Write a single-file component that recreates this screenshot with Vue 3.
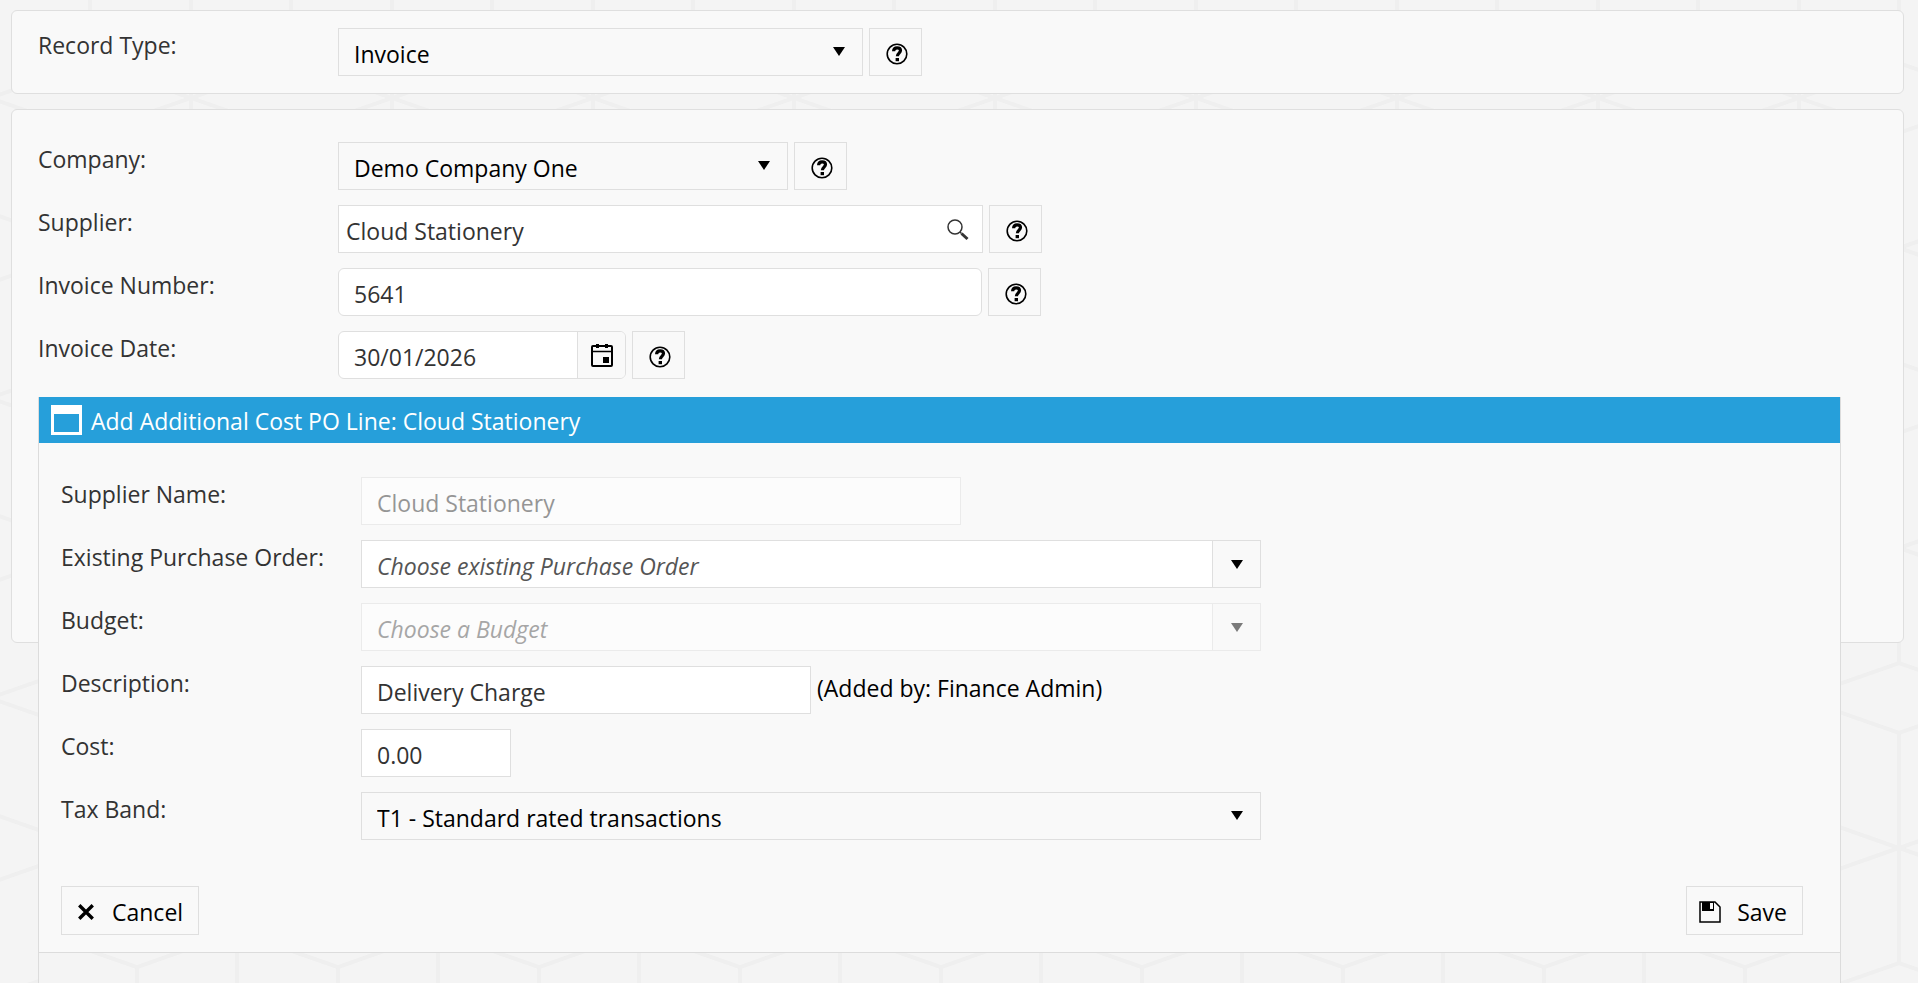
<template>
  <main class="page">
    <section class="card card--type">
      <div class="field">
        <label class="field__label" for="recordType">Record Type:</label>
        <div class="dropdown dropdown--medium">
          <select id="recordType" v-model="recordType">
            <option>Invoice</option>
            <option>Credit Note</option>
          </select>
          <svg class="dropdown__arrow" viewBox="0 0 12 9"><path d="M0 0h12L6 9z" /></svg>
        </div>
        <button type="button" class="help" aria-label="Help">
          <svg viewBox="0 0 22 22"><use href="#icon-help" /></svg>
        </button>
      </div>
    </section>

    <section class="card card--details">
      <div class="field">
        <label class="field__label" for="company">Company:</label>
        <div class="dropdown dropdown--small">
          <select id="company" v-model="company">
            <option>Demo Company One</option>
          </select>
          <svg class="dropdown__arrow" viewBox="0 0 12 9"><path d="M0 0h12L6 9z" /></svg>
        </div>
        <button type="button" class="help" aria-label="Help">
          <svg viewBox="0 0 22 22"><use href="#icon-help" /></svg>
        </button>
      </div>

      <div class="field">
        <label class="field__label" for="supplier">Supplier:</label>
        <div class="search">
          <input id="supplier" v-model="supplier" type="text" />
          <button type="button" class="search__button" aria-label="Search suppliers">
            <svg viewBox="0 0 22 22">
              <circle cx="8" cy="8" r="7" fill="none" stroke="#333" stroke-width="1.5" />
              <path d="M13 13l1.5 1.5" stroke="#333" stroke-width="1.5" />
              <path d="M14.5 14.5l6 5.5" stroke="#333" stroke-width="3" />
            </svg>
          </button>
        </div>
        <button type="button" class="help" aria-label="Help">
          <svg viewBox="0 0 22 22"><use href="#icon-help" /></svg>
        </button>
      </div>

      <div class="field">
        <label class="field__label" for="invoiceNumber">Invoice Number:</label>
        <input id="invoiceNumber" v-model="invoiceNumber" class="textbox textbox--rounded" type="text" />
        <button type="button" class="help" aria-label="Help">
          <svg viewBox="0 0 22 22"><use href="#icon-help" /></svg>
        </button>
      </div>

      <div class="field">
        <label class="field__label" for="invoiceDate">Invoice Date:</label>
        <div class="date">
          <input id="invoiceDate" v-model="invoiceDate" type="text" />
          <button type="button" class="date__button" aria-label="Open calendar">
            <svg viewBox="0 0 22 24">
              <rect x="1" y="3" width="20" height="20" rx="1" fill="none" stroke="#000" stroke-width="2" />
              <path d="M1 8.5h20" stroke="#000" stroke-width="1.5" />
              <path d="M5 1h3v4H5zM14 1h3v4h-3zM12 14h6v6h-6z" />
            </svg>
          </button>
        </div>
        <button type="button" class="help" aria-label="Help">
          <svg viewBox="0 0 22 22"><use href="#icon-help" /></svg>
        </button>
      </div>

      <div class="window-slot">
        <form class="window" @submit.prevent>
          <header class="window__header">
            <svg class="window__icon" viewBox="0 0 31 30">
              <path fill-rule="evenodd" d="M0 0h31v30H0zM3 9v18h25V9z" />
            </svg>
            <h2>Add Additional Cost PO Line: {{ supplier }}</h2>
          </header>

          <div class="window__body">
            <div class="field">
              <label class="field__label" for="supplierName">Supplier Name:</label>
              <input id="supplierName" :value="supplier" class="textbox textbox--name" type="text" disabled />
            </div>

            <div v-for="combo in combos" :key="combo.id" class="field">
              <label class="field__label" :for="combo.id">{{ combo.label }}</label>
              <div class="combo" :class="{ 'combo--disabled': combo.disabled }">
                <input
                  :id="combo.id"
                  v-model="combo.value"
                  type="text"
                  :placeholder="combo.placeholder"
                  :disabled="combo.disabled"
                />
                <button type="button" :disabled="combo.disabled" :aria-label="'Open ' + combo.label">
                  <svg viewBox="0 0 12 9"><path d="M0 0h12L6 9z" /></svg>
                </button>
              </div>
            </div>

            <div class="field">
              <label class="field__label" for="description">Description:</label>
              <input id="description" v-model="description" class="textbox textbox--description" type="text" />
              <span class="field__note">(Added by: Finance Admin)</span>
            </div>

            <div class="field">
              <label class="field__label" for="cost">Cost:</label>
              <input id="cost" v-model="cost" class="textbox textbox--cost" type="text" />
            </div>

            <div class="field">
              <label class="field__label" for="taxBand">Tax Band:</label>
              <div class="dropdown dropdown--large">
                <select id="taxBand" v-model="taxBand">
                  <option>T1 - Standard rated transactions</option>
                </select>
                <svg class="dropdown__arrow" viewBox="0 0 12 9"><path d="M0 0h12L6 9z" /></svg>
              </div>
            </div>
          </div>

          <footer class="window__footer">
            <button type="button" class="action action--cancel">
              <svg viewBox="0 0 16 16"><path d="M2 2l12 12M14 2L2 14" stroke="#000" stroke-width="3" /></svg>
              Cancel
            </button>
            <button type="submit" class="action action--save">
              <svg viewBox="0 0 22 22">
                <path d="M1 1h15l5 5v15H1z" fill="none" stroke="#000" stroke-width="1.5" />
                <path fill-rule="evenodd" d="M3 1h12v9H3zM11 2v6h3V2z" />
              </svg>
              Save
            </button>
          </footer>
          <div class="window__backdrop"></div>
        </form>
      </div>
    </section>

    <!-- shared help glyph -->
    <svg class="sprite" aria-hidden="true">
      <symbol id="icon-help" viewBox="0 0 22 22">
        <circle cx="11" cy="11" r="9.8" fill="none" stroke="#000" stroke-width="1.6" />
        <path d="M7.6 8.200C7.7 6 9.2 4.800 11.100 4.800c2.100 0 3.400 1.200 3.400 2.800 0 2.400-3.100 2.600-3.100 5.600" fill="none" stroke="#000" stroke-width="3.200" />
        <path d="M9.600 15h3.400v3.200H9.600z" />
      </symbol>
    </svg>
  </main>
</template>

<script setup>
import { ref } from 'vue';

const recordType = ref('Invoice');
const company = ref('Demo Company One');
const supplier = ref('Cloud Stationery');
const invoiceNumber = ref('5641');
const invoiceDate = ref('30/01/2026');

// PO line values
const description = ref('Delivery Charge');
const cost = ref('0.00');
const taxBand = ref('T1 - Standard rated transactions');

const combos = ref([
  {
    id: 'purchaseOrder',
    label: 'Existing Purchase Order:',
    placeholder: 'Choose existing Purchase Order',
    value: '',
    disabled: false
  },
  {
    id: 'budget',
    label: 'Budget:',
    placeholder: 'Choose a Budget',
    value: '',
    disabled: true
  }
]);
</script>

<style>
:root {
  --cubes: url("data:image/svg+xml,%3Csvg xmlns='http://www.w3.org/2000/svg' width='201' height='300' viewBox='0 0 201 300'%3E%3Cg fill='none' stroke='%23efefef' stroke-width='4'%3E%3Cpath d='M0 0V115L100 150L0 185V300M201 0V115L100 150L201 185V300M0 0L100 35L201 0M0 300L100 265L201 300M100 35V265'/%3E%3C/g%3E%3C/svg%3E");
}

body {
  background: #f4f4f4 var(--cubes) -10px 98px;
}
</style>

<style scoped>
.page {
  box-sizing: border-box;
  min-height: 100vh;
  padding: 10px 14px 0 11px;
  color: #333;
  font-family: "Segoe UI", "Open Sans", "Noto Sans", sans-serif;
  font-size: 23px;
  line-height: 32px;
}

.page * {
  box-sizing: border-box;
}

.sprite {
  position: absolute;
  width: 0;
  height: 0;
}

.card {
  background: #f9f9f9;
  border: 1px solid #dfdfdf;
  border-radius: 6px;
  padding: 17px 62px 17px 26px;
}

.card--details {
  margin-top: 15px;
  padding-top: 32px;
  padding-bottom: 0;
}

.field {
  display: flex;
  gap: 6px;
  margin-bottom: 15px;
}

.card--type .field {
  margin-bottom: 0;
}

.field__label {
  flex: 0 0 294px;
  height: 48px;
  padding-top: 1px;
  white-space: nowrap;
}

.field__note {
  padding-top: 6px;
  color: #000;
}

input,
select,
button {
  margin: 0;
  color: inherit;
  font: inherit;
}

.textbox,
.dropdown select,
.search,
.date,
.combo {
  height: 48px;
  background: #fff;
  border: 1px solid #dfdfdf;
  border-radius: 0;
}

.textbox {
  width: 644px;
  padding: 3px 15px 0;
}

.textbox--rounded {
  border-radius: 6px;
}

.textbox--name {
  width: 600px;
}

.textbox--description {
  width: 450px;
}

.textbox--cost {
  width: 150px;
}

.textbox:disabled,
.combo--disabled {
  opacity: 0.5;
}

/*drop-downs*/
.dropdown {
  position: relative;
}

.dropdown--small {
  width: 450px;
}

.dropdown--medium {
  width: 525px;
}

.dropdown--large {
  width: 900px;
}

.dropdown select {
  width: 100%;
  padding: 3px 40px 0 15px;
  background: #f9f9f9;
  color: #000;
  appearance: none;
}

.dropdown__arrow {
  position: absolute;
  top: 19px;
  right: 18px;
  width: 12px;
  height: 9px;
  pointer-events: none;
}

.search,
.date,
.combo {
  display: flex;
}

.search input,
.date input,
.combo input {
  flex: 1;
  min-width: 0;
  border: 0;
  background: none;
  padding: 3px 15px 0;
}

.search button,
.date button,
.combo button {
  display: flex;
  align-items: center;
  justify-content: center;
  width: 48px;
  padding: 0;
  border: 0;
  border-left: 1px solid #dfdfdf;
  background: #f9f9f9;
}

.search {
  width: 645px;
}

.search input {
  padding-left: 7px;
}

.search .search__button {
  padding-top: 2px;
  border: 0;
  background: none;
}

.search__button svg {
  width: 22px;
  height: 22px;
}

.date {
  width: 288px;
  border-radius: 6px;
  overflow: hidden;
}

.date__button svg {
  width: 22px;
  height: 24px;
}

.combo {
  width: 900px;
}

.combo button svg {
  width: 12px;
  height: 9px;
}

.combo input::placeholder {
  color: #555;
  font-style: italic;
  opacity: 1;
}

.help {
  width: 53px;
  height: 48px;
  padding: 4px 0 0 3px;
  border: 1px solid #dfdfdf;
  background: #f9f9f9;
  line-height: 0;
}

.help svg {
  width: 22px;
  height: 22px;
}

/*floating PO line window, taller than the card below it*/
.window-slot {
  position: relative;
  height: 248px;
}

.window {
  position: absolute;
  top: 3px;
  left: 0;
  right: 0;
  border: 1px solid #dcdcdc;
  border-top: 0;
  border-bottom: 0;
}

.window__header {
  display: flex;
  align-items: center;
  gap: 9px;
  height: 46px;
  padding: 0 12px;
  background: #269fda;
  color: #fff;
}

.window__header h2 {
  margin: 0;
  padding-top: 2px;
  font-size: 23px;
  font-weight: 400;
}

.window__icon {
  width: 31px;
  height: 30px;
  fill: #fff;
}

.window__body {
  padding: 34px 22px 15px;
  background: #f9f9f9;
}

.window__body .field:last-child {
  margin-bottom: 0;
}

.window__footer {
  display: flex;
  justify-content: space-between;
  padding: 31px 37px 17px 22px;
  border-bottom: 1px solid #dcdcdc;
  background: #f9f9f9;
}

.window__backdrop {
  height: 30px;
  background: #f4f4f4 var(--cubes) 98px -171px;
}

.action {
  display: flex;
  align-items: center;
  height: 49px;
  padding: 3px 15px 0;
  border: 1px solid #dfdfdf;
  background: #f9f9f9;
  color: #000;
}

.action--cancel svg {
  width: 18px;
  height: 18px;
  margin-right: 17px;
}

.action--save {
  padding-left: 12px;
}

.action--save svg {
  width: 22px;
  height: 22px;
  margin-right: 16px;
}
</style>
